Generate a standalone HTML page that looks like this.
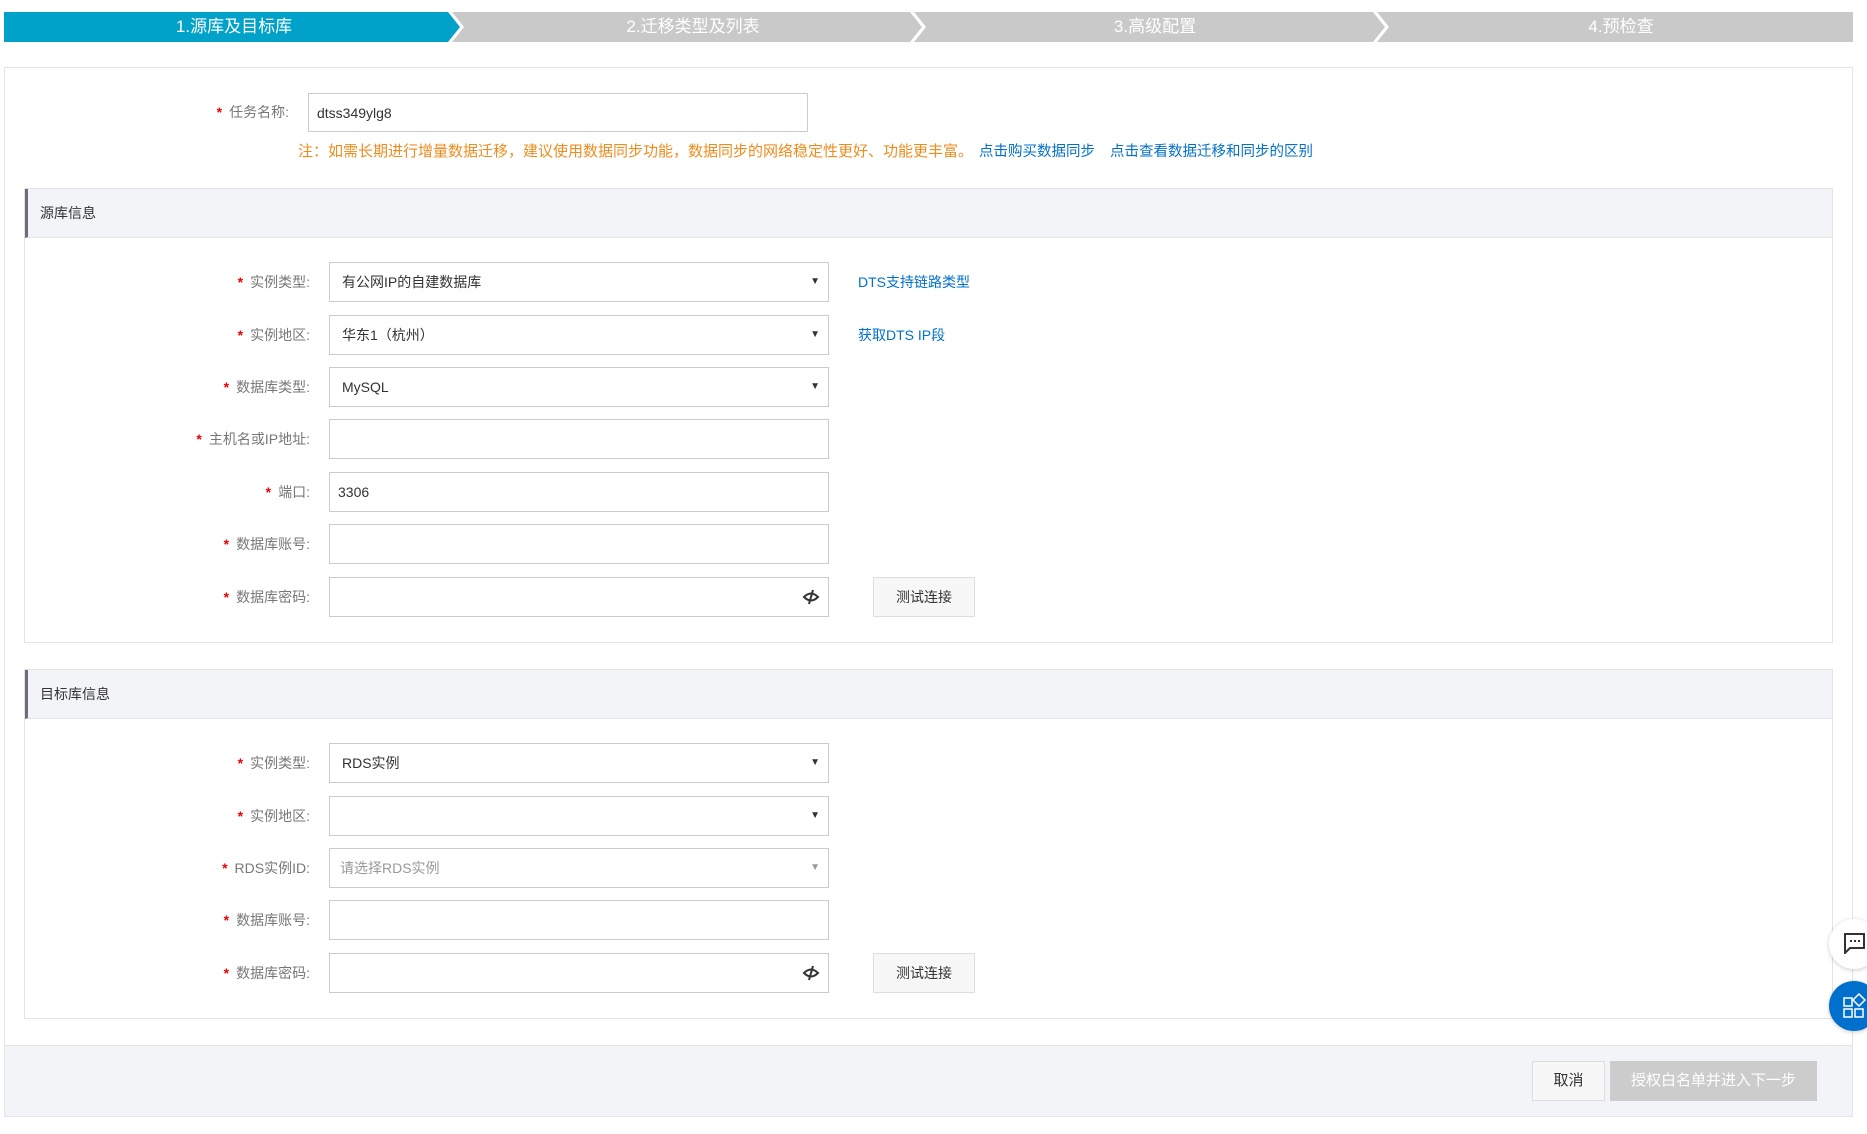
<!DOCTYPE html>
<html><head><meta charset="utf-8"><style>
*{box-sizing:border-box;margin:0;padding:0}
body{width:1867px;height:1134px;background:#fff;font-family:"Liberation Sans","Noto Sans CJK SC",sans-serif;font-size:14px;color:#333;position:relative;overflow:hidden}
.abs{position:absolute}
.step{position:absolute;top:12px;height:30px;line-height:30px;text-align:center;color:#fff;font-size:17px}
.panel{position:absolute;left:4px;top:67px;width:1849px;height:1050px;border:1px solid #e2e4e8}
.sec{position:absolute;left:24px;width:1809px;border:1px solid #e2e4e8}
.sech{height:49px;background:#f3f4f7;border-left:3px solid #6b6b7b;border-bottom:1px solid #e2e4e8;line-height:48px;padding-left:12px;font-size:14px;color:#333}
.lbl{position:absolute;text-align:right;color:#777;font-size:14px;width:300px;line-height:40px;height:40px}
.lbl b{color:#e00;font-weight:bold;margin-right:7px}
.inp{position:absolute;height:40px;border:1px solid #ccc;line-height:38px;padding-left:12px;font-size:14px;color:#333;background:#fff}
.arr{position:absolute;right:8px;top:0;font-size:10px;color:#333}
.lnk{position:absolute;color:#0070cc;font-size:14px;line-height:40px}
.btn{position:absolute;height:40px;border:1px solid #ddd;background:#f7f7f7;text-align:center;line-height:38px;font-size:14px;color:#333}
.eye{position:absolute;right:8px;top:10px;width:18px;height:18px}
</style></head><body>
<svg class="abs" style="left:0;top:12px" width="1867" height="30">
<polygon points="4,0 448,0 460,15 448,30 4,30" fill="#00a2ca"/>
<polygon points="452,0 910,0 922,15 910,30 452,30 464,15" fill="#c9c9c9"/>
<polygon points="914,0 1373,0 1385,15 1373,30 914,30 926,15" fill="#c9c9c9"/>
<polygon points="1377,0 1853,0 1853,30 1377,30 1389,15" fill="#c9c9c9"/>
</svg>
<div class="step" style="left:4px;width:460px">1.源库及目标库</div>
<div class="step" style="left:464px;width:458px">2.迁移类型及列表</div>
<div class="step" style="left:926px;width:458px">3.高级配置</div>
<div class="step" style="left:1389px;width:464px">4.预检查</div>

<div class="panel"></div>
<div class="abs" style="left:5px;top:1045px;width:1847px;height:71px;background:#f3f4f7;border-top:1px solid #e2e4e8"></div>

<div class="lbl" style="left:-11px;top:92px"><b>*</b>任务名称:</div>
<div class="inp" style="left:308px;top:93px;width:500px;height:39px;padding-left:8px">dtss349ylg8</div>
<div class="abs" style="left:298px;top:143px;font-size:15px;color:#f08c1e;line-height:18px;white-space:nowrap">注：如需长期进行增量数据迁移，建议使用数据同步功能，数据同步的网络稳定性更好、功能更丰富。</div>
<div class="abs" style="left:979px;top:143px;font-size:14.5px;color:#0070cc;line-height:18px;white-space:nowrap">点击购买数据同步</div>
<div class="abs" style="left:1110px;top:143px;font-size:14.5px;color:#0070cc;line-height:18px;white-space:nowrap">点击查看数据迁移和同步的区别</div>

<div class="sec" style="top:188px;height:455px"><div class="sech">源库信息</div></div>
<div class="sec" style="top:669px;height:350px"><div class="sech">目标库信息</div></div>

<div class="lbl" style="left:10px;top:262px"><b>*</b>实例类型:</div>
<div class="inp" style="left:329px;top:262px;width:500px">有公网IP的自建数据库<span class="arr">▼</span></div>
<div class="lnk" style="left:858px;top:262px">DTS支持链路类型</div>
<div class="lbl" style="left:10px;top:315px"><b>*</b>实例地区:</div>
<div class="inp" style="left:329px;top:315px;width:500px">华东1（杭州）<span class="arr">▼</span></div>
<div class="lnk" style="left:858px;top:315px">获取DTS IP段</div>
<div class="lbl" style="left:10px;top:367px"><b>*</b>数据库类型:</div>
<div class="inp" style="left:329px;top:367px;width:500px">MySQL<span class="arr">▼</span></div>
<div class="lbl" style="left:10px;top:419px"><b>*</b>主机名或IP地址:</div>
<div class="inp" style="left:329px;top:419px;width:500px"></div>
<div class="lbl" style="left:10px;top:472px"><b>*</b>端口:</div>
<div class="inp" style="left:329px;top:472px;width:500px;padding-left:8px">3306</div>
<div class="lbl" style="left:10px;top:524px"><b>*</b>数据库账号:</div>
<div class="inp" style="left:329px;top:524px;width:500px"></div>
<div class="lbl" style="left:10px;top:577px"><b>*</b>数据库密码:</div>
<div class="inp" style="left:329px;top:577px;width:500px"><svg class="eye" viewBox="0 0 18 18"><path d="M2 9 Q9 2 16 9 Q9 16 2 9Z" fill="none" stroke="#333" stroke-width="2"/><line x1="11" y1="2" x2="7" y2="16" stroke="#333" stroke-width="2"/></svg></div>
<div class="btn" style="left:873px;top:577px;width:102px">测试连接</div>

<div class="lbl" style="left:10px;top:743px"><b>*</b>实例类型:</div>
<div class="inp" style="left:329px;top:743px;width:500px">RDS实例<span class="arr">▼</span></div>
<div class="lbl" style="left:10px;top:796px"><b>*</b>实例地区:</div>
<div class="inp" style="left:329px;top:796px;width:500px"><span class="arr">▼</span></div>
<div class="lbl" style="left:10px;top:848px"><b>*</b>RDS实例ID:</div>
<div class="inp" style="left:329px;top:848px;width:500px;color:#999;padding-left:10px">请选择RDS实例<span class="arr" style="color:#999">▼</span></div>
<div class="lbl" style="left:10px;top:900px"><b>*</b>数据库账号:</div>
<div class="inp" style="left:329px;top:900px;width:500px"></div>
<div class="lbl" style="left:10px;top:953px"><b>*</b>数据库密码:</div>
<div class="inp" style="left:329px;top:953px;width:500px"><svg class="eye" viewBox="0 0 18 18"><path d="M2 9 Q9 2 16 9 Q9 16 2 9Z" fill="none" stroke="#333" stroke-width="2"/><line x1="11" y1="2" x2="7" y2="16" stroke="#333" stroke-width="2"/></svg></div>
<div class="btn" style="left:873px;top:953px;width:102px">测试连接</div>

<div class="btn" style="left:1532px;top:1061px;width:73px;font-size:15px">取消</div>
<div class="abs" style="left:1610px;top:1061px;width:207px;height:40px;background:#ccc;color:#fff;text-align:center;line-height:40px;font-size:15px">授权白名单并进入下一步</div>

<div class="abs" style="left:1829px;top:919px;width:50px;height:50px;border-radius:50%;background:#fff;box-shadow:0 1px 5px rgba(0,0,0,.2)"></div>
<svg class="abs" style="left:1843px;top:932px" width="22" height="22" viewBox="0 0 22 22"><path d="M2 2H21V16H7L2 21Z" fill="none" stroke="#333" stroke-width="2"/><rect x="7" y="8" width="2" height="2" fill="#333"/><rect x="11" y="8" width="2" height="2" fill="#333"/><rect x="15" y="8" width="2" height="2" fill="#333"/></svg>
<div class="abs" style="left:1829px;top:981px;width:50px;height:50px;border-radius:50%;background:#0070cc;box-shadow:0 1px 5px rgba(0,0,0,.2)"></div>
<svg class="abs" style="left:1843px;top:993px" width="24" height="26" viewBox="0 0 24 26"><g fill="none" stroke="#fff" stroke-width="1.5"><rect x="1" y="5" width="8" height="8"/><rect x="1" y="16" width="8" height="8"/><rect x="12" y="16" width="8" height="8"/><path d="M16 1L22 7L16 13L10 7Z"/></g></svg>
</body></html>
